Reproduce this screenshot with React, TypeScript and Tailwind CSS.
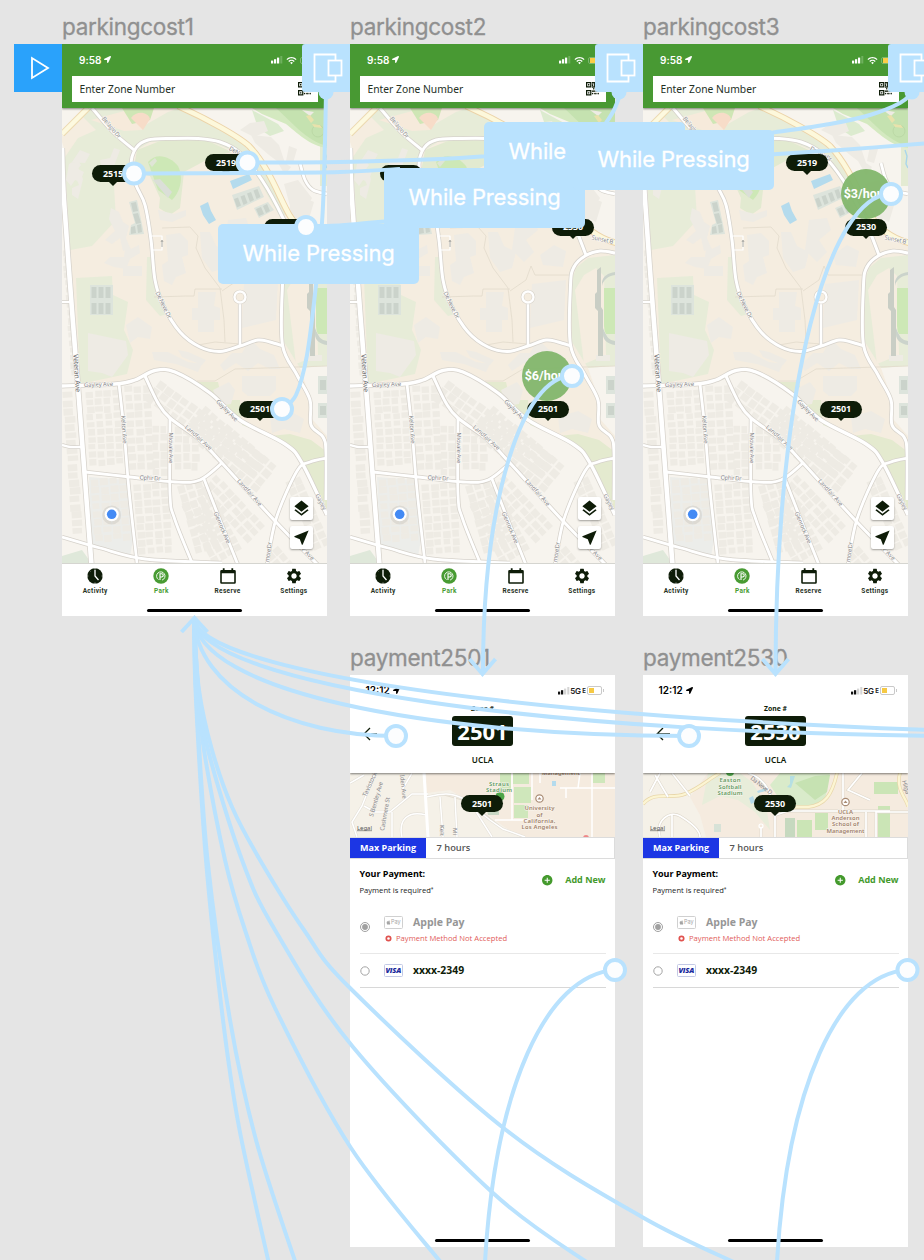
import React from "react";
import { MdAddCircle, MdLayers, MdNearMe, MdSettings, MdWifi } from "react-icons/md";
import { FaApple, FaLocationArrow } from "react-icons/fa";

type Pt = [number, number];

const LINK = "#b9e2fe";
const INK = "#0e1c08";

function smooth(p: Pt[]): string {
  let d = `M${p[0][0]} ${p[0][1]}`;
  for (let i = 0; i < p.length - 1; i++) {
    const a = p[i - 1] ?? p[i];
    const b = p[i];
    const c = p[i + 1];
    const e = p[i + 2] ?? c;
    d += `C${b[0] + (c[0] - a[0]) / 6} ${b[1] + (c[1] - a[1]) / 6} ${c[0] - (e[0] - b[0]) / 6} ${c[1] - (e[1] - b[1]) / 6} ${c[0]} ${c[1]}`;
  }
  return d;
}

const roads: { p: Pt[]; w: number }[] = [
  { p: [[92, 108], [113, 132], [134, 150]], w: 3 },
  { p: [[283, 346], [270, 342], [258, 340], [240, 346], [220, 351.5], [200, 347], [180, 332], [163, 305], [155, 280], [151, 240], [145, 205], [136, 185], [131, 165], [136, 148], [148, 140], [172, 138.5], [198, 138.5], [220, 142], [240, 153], [262, 180], [283, 218], [298, 255]], w: 3 },
  { p: [[327, 253], [312, 251], [297, 256], [286, 267], [282.5, 285], [282.5, 345], [297, 375], [310, 400], [311, 425], [323, 437], [326, 452], [326, 500]], w: 3 },
  { p: [[240, 303], [240, 345]], w: 2.6 },
  { p: [[62, 386], [115, 384], [135, 380], [155, 370.5], [175, 372], [210, 393], [240, 420], [285, 444], [302, 463], [327, 515]], w: 3.4 },
  { p: [[119, 384], [124, 430], [129, 490], [137, 563]], w: 2.8 },
  { p: [[145, 376], [158, 403], [170, 418], [200, 440], [222, 463], [275, 521], [318, 565]], w: 3 },
  { p: [[170, 418], [170, 495], [175, 520], [193, 565]], w: 2.8 },
  { p: [[85, 472], [130, 477], [175, 482], [200, 480], [222, 463]], w: 2.8 },
  { p: [[204, 479], [220, 520], [238, 565]], w: 2.8 },
  { p: [[62, 537], [100, 548], [145, 559], [222, 563]], w: 2.8 },
  { p: [[327, 458], [310, 462], [297, 471], [276, 519], [267, 565]], w: 2.8 },
  { p: [[62, 445], [70, 447], [82, 447]], w: 2.4 },
  { p: [[62, 302], [70, 302]], w: 2.2 },
  { p: [[300, 163], [305, 180], [313, 190], [327, 194]], w: 2.8 },
  { p: [[62, 148], [64, 200], [72, 310], [79, 400], [85, 480], [91.5, 565]], w: 4.6 },
];

const paths: Pt[][] = [
  [[162, 228], [190, 227], [198, 236], [196, 248], [205, 268], [220, 288], [224, 320], [225, 342]],
  [[154, 297], [186, 296], [194, 296], [195, 289], [222, 289]],
  [[222, 291], [238, 280], [243, 266], [247, 275], [282, 275]],
  [[197, 381], [215, 381], [235, 369], [327, 366]],
  [[198, 345], [215, 342], [240, 344]],
];

function noise(n: number): number {
  const v = Math.sin(n * 12.9898) * 43758.5453;
  return v - Math.floor(v);
}

type Block = { x: number; y: number; rot: number; cols: number; rows: number; w: number; h: number; seed: number };

const blocks: Block[] = [
  { x: 85, y: 391, rot: -3, cols: 4, rows: 10, w: 9, h: 7.6, seed: 1 },
  { x: 90, y: 479, rot: -4, cols: 4, rows: 8, w: 9.4, h: 8, seed: 2 },
  { x: 124, y: 386, rot: -3, cols: 3, rows: 10, w: 9, h: 8.5, seed: 3 },
  { x: 152, y: 425, rot: 0, cols: 2, rows: 6, w: 8, h: 8.6, seed: 13 },
  { x: 133, y: 484, rot: -4, cols: 4, rows: 9, w: 9, h: 8, seed: 4 },
  { x: 174, y: 426, rot: 0, cols: 3, rows: 5, w: 8.5, h: 9, seed: 5 },
  { x: 176, y: 486, rot: -16, cols: 3, rows: 8, w: 9, h: 9, seed: 6 },
  { x: 160, y: 379, rot: 36, cols: 14, rows: 3, w: 9.6, h: 9, seed: 7 },
  { x: 205, y: 405, rot: 40, cols: 10, rows: 4, w: 9.6, h: 9, seed: 17 },
  { x: 217, y: 474, rot: 47, cols: 8, rows: 3, w: 9, h: 8.6, seed: 8 },
  { x: 211, y: 490, rot: 62, cols: 8, rows: 4, w: 8.5, h: 8.6, seed: 9 },
  { x: 300, y: 475, rot: 66, cols: 9, rows: 2, w: 8.5, h: 9, seed: 10 },
  { x: 62, y: 250, rot: -4, cols: 1, rows: 17, w: 8, h: 7.5, seed: 11 },
  { x: 62, y: 392, rot: -4, cols: 1, rows: 18, w: 12, h: 8, seed: 12 },
  { x: 278, y: 545, rot: 50, cols: 3, rows: 2, w: 9, h: 9, seed: 14 },
];

function BlockGroup({ b }: { b: Block }) {
  const out: React.ReactNode[] = [];
  for (let r = 0; r < b.rows; r++)
    for (let c = 0; c < b.cols; c++) {
      const k = b.seed * 100 + r * 11 + c;
      out.push(
        <rect
          key={k}
          x={c * b.w + noise(k) * 1.2}
          y={r * b.h + noise(k + 0.3) * 1.2}
          width={b.w - 1 - noise(k + 0.6) * 1.6}
          height={b.h - 0.8 - noise(k + 0.9) * 2}
        />,
      );
    }
  return <g transform={`translate(${b.x} ${b.y}) rotate(${b.rot})`}>{out}</g>;
}

function MapText({ x, y, r, w, s = 6, c = "#88888c", children }: { x: number; y: number; r: number; w: number; s?: number; c?: string; children: string }) {
  return (
    <text
      transform={`translate(${x} ${y}) rotate(${r})`}
      textAnchor="middle"
      dominantBaseline="central"
      fontSize={s}
      textLength={w}
      fill={c}
      stroke="#faf8f4"
      strokeWidth="1.2"
      paintOrder="stroke"
    >
      {children}
    </text>
  );
}

function CampusMap() {
  return (
    <svg viewBox="62 108 265 455" className="block h-[455px] w-[265px]" fontFamily="'Noto Sans', sans-serif">
      <rect x="62" y="108" width="265" height="456" fill="#f5ede0" />
      <path d="M62 108H92L82 112 62 136Z" fill="#f7f4ee" />
      <path d="M62 142L64 148 78 388 L130 383 155 372 175 372 212 394 240 421 285 444 302 463 327 515V564H62Z" fill="#f7f4ee" />
      <path d="M186 108H327V240L306 236 288 214 262 162 240 140Z" fill="#f7f4ee" />
      <path d="M327 365L300 368 311 400V418L327 436Z" fill="#f7f4ee" />
      <path d="M80 114L92 108 134 150 128 170 114 186 116 220 92 246 70 250 66 180 63 160 78 138 96 130Z" fill="#e7ecd8" />
      <path d="M93 108H126L140 128 168 112 180 108 240 141 262 164 286 215 280 217 256 175 236 152 206 140 150 142 137 150 120 136Z" fill="#e7ecd8" />
      <path d="M137 150L160 141 206 140 232 152 212 157 184 172 180 208 170 215 159 208 160 198 150 176 133 172Z" fill="#e2ead0" />
      <path d="M76 278L112 276 113 295 128 302 124 330 133 350 127 374 80 384Z" fill="#e7ecd8" />
      <path d="M147 257L152 257 156 290 168 314 160 316 146 300Z" fill="#e7ecd8" />
      <path d="M283 283L288 268 300 258 327 255V366L300 368 284 342Z" fill="#e7ecd8" />
      <path d="M287 290L296 275 308 268 316 276 318 355 296 364Z" fill="#f5ede0" />
      <path d="M197 382H218L222 400 240 400 242 425 270 436 290 434 311 440 327 452V515L302 463 286 444 240 420 212 392Z" fill="#e4eacf" />
      <path d="M320 110H327V186H320Z" fill="#e4ebd3" />
      <path d="M91 120L128 110 150 108 152 114 142 130 124 131Z" fill="#f6eadb" />
      <path d="M122 108H154L150 120 132 124Z" fill="#cfe6b5" />
      <path d="M131 118C137 110 148 112 150 119L143 130Z" fill="#f7dcc8" />
      <path d="M252 108H327V148C310 146 296 132 286 124L262 114Z" fill="#d4e9c0" />
      <path d="M276 108H327V146C305 140 292 122 276 108Z" fill="#c5e2b0" />
      <path d="M252 110L278 124 284 131 270 136 258 128Z" fill="#dcebcf" />
      <path d="M148 162C156 152 170 156 178 166C184 178 180 192 172 200L158 190Z" fill="#cde8b6" />
      <path d="M153 180L160 179 172 192 168 198Z" fill="#dbdfd8" />
      <path d="M149 163L155 158 157 161 152 167Z" fill="#dfe5d6" />
      <path d="M62 556L82 550 92 564H62Z" fill="#dfe8da" />
      <path d="M89 477L128 480 133 540 130 556 92 547Z" fill="#ecedea" />
      <g fill="#eeebe4">
        <path d="M70 160l8-5 4 6-3 4 6 3-4 10-5-2-4 6-5-6zM73 158l8-12 10 4-5 9zM73 184l7-3-6-14 5-4 5 12-5 20-6-4z" transform="translate(-1 4)" />
        <path d="M111 208l8 4 4 10 6 4-3 12 4 10-7 3-3-13-8 6-7-4 10-9-6-12zM104 263l6-6 14 0 2-16 5 8 8-4 1 8-10 6-4 10-12-2z" />
        <path d="M123 266h19v10h-19zM166 235l14-2 8 8 0 14-6 2 4 16-10 4-4 8-8-4-2-16 6-4zM158 210l16 4 12-4v6l-14 6-12-2zM200 232l10 0 6 14 12 6-4 16-12 4-10-14zM228 220l18-2 4 12-12 10 8 12-10 10-12-12z" />
        <path d="M198 292l18 0-2 14 6 2v12h-6v12h-16v-12h-6v-12h6zM244 284l34-4-2 40-34 8zM252 255l14-10 12 6-3 16-20-2zM126 325l12-8 14 10-2 12-12-2-8 6zM88 333l38 8 2 14-16 22-10-4-14-2z" />
        <path d="M232 353l10 0 8-14 10 10 14 6 6 14-10 0-12-6-10 8-12-8-12 8-4-6zM242 376h34v14l-6 6h-22l-6-5zM152 352l16 0 20 10 14 2-4 8-22-8-22-4zM270 417l20-6 14 8-4 14-16-4-12 4zM308 355h14v6h-14zM178 350l10 2 18 8-4 5-20-8zM213 390l16 -8 6 8-4 14-12 2z" />
        <path d="M240 130l10-7 14-2 4 10-14 6zM251 135l20 2 8 8 6 18 6 4-6 8-8-14-8-6-14-12zM289 146l8 3-4 14-7-2zM284 184l14-4 14 18-8 14-4 12-12-8 2-10zM300 196l14 6-6 20-12-6zM302 110l12 2-4 4zM100 160l10-2 4-10 6 2-6 16-12 6z" />
        {blocks.map((b) => (
          <BlockGroup key={b.seed} b={b} />
        ))}
      </g>
      <g fill="#dde4dc">
        <path d="M129 202l8-2 7 34-15 1 2-10 4-2zM90 285h23v30h-23zM232 195l27-9 5 11-27 13zM254 208l14-6 6 8-15 8z" />
        <path d="M318 376h9v18h-9zM318 403h9v15h-9z" />
      </g>
      <g fill="#cbd3cb">
        <path d="M131 203l5-1 2 9-5 1zM133 214l5-1 3 10-5 1zM131 227l4-1 1 7-5 1zM137 225l4-1 1 8-4 1z" />
        <path d="M91.500 287h5v11h-5zM98.500 287h5v11h-5zM105.500 287h5v11h-5zM91.500 303h5v11h-5zM98.500 303h5v11h-5zM105.500 303h5v11h-5z" />
        <path d="M234 199l4-1.500 3 8-4 2zM240.500 196.500l4-1.500 3 8-4 2zM247 193.500l4-1.500 3 8-4 2zM253.500 190.500l4-1.500 3 8-4 2zM256 209l5-2 3 7-5 2zM263 206l4-2 3 7-4 2zM320 380h6v10h-6zM320 406h6v9h-6z" />
        <path d="M309 270l4-3v40l2 3v46h-5v-45l-3-3v-14l2-2z" fill="#c9cec5" />
        <path d="M327 275c-7 1-12 5-13 11v-4c1-6 6-9 13-10zM315 328c4 10 6 12 12 13v4c-8-1-12-6-12-10z" />
      </g>
      <path d="M316 288h11v46h-9q-2-3-2-8z" fill="#cde8b6" />
      <g fill="#b4dbed">
        <path d="M230 181l19-7 3 6-19 9zM200 206l8-4 3 9 5 9-7 4-6-9z" />
      </g>
      <g fill="none" stroke="#e2dacb" strokeWidth="0.800">
        {paths.map((p, i) => (
          <path key={i} d={"M" + p.map((q) => q.join(" ")).join("L")} />
        ))}
      </g>
      <g fill="none" strokeLinejoin="round">
        <path d="M62 134L88 108" stroke="#ecd9b0" strokeWidth="6.500" />
        <path d="M62 134L88 108" stroke="#fdf9df" strokeWidth="4.500" />
        {roads.map((r, i) => (
          <path key={i} d={smooth(r.p)} stroke="#d6d2cb" strokeWidth={r.w + 1.5} />
        ))}
        {roads.map((r, i) => (
          <path key={i} d={smooth(r.p)} stroke="#ffffff" strokeWidth={r.w} />
        ))}
        <path d="M178 106C205 118 238 136 249 146C270 168 280 200 290 216C300 232 314 239 328 243" stroke="#ecd3a8" strokeWidth="6.400" />
        <path d="M178 106C205 118 238 136 249 146C270 168 280 200 290 216C300 232 314 239 328 243" stroke="#fdf8db" strokeWidth="4.600" />
        <circle cx="240" cy="297" r="5.500" stroke="#d8d3ca" strokeWidth="3.600" fill="#f5ede0" />
        <circle cx="240" cy="297" r="5.500" stroke="#ffffff" strokeWidth="2.400" />
        <path d="M152 236h10v14h-10" stroke="#fff" strokeWidth="1.200" />
        <path d="M162 247v-6m-1 1 1-2 1 2" stroke="#9a9a96" strokeWidth="0.800" />
        <circle cx="318" cy="131" r="6" stroke="#b8d6a2" strokeWidth="0.800" />
      </g>
      <path d="M306 116l4-1 4 5-3 3zM312 124l8 1 2 3-8-1z" fill="#e9e2ac" />
      <path d="M324 150l2 6-1 8 2 4" stroke="#a9d5ec" strokeWidth="1.400" fill="none" />
      <MapText x={111.500} y={127.500} r={50} w={26}>Bellagio Dr</MapText>
      <MapText x={240} y={154} r={30} w={24}>De Neve Dr</MapText>
      <MapText x={163.500} y={305} r={64} w={29}>De Neve Dr</MapText>
      <MapText x={77} y={373} r={86} w={38} s={7} c="#68686c">Veteran Ave</MapText>
      <MapText x={98.500} y={384.500} r={-2} w={29}>Gayley Ave</MapText>
      <MapText x={227} y={410.500} r={45} w={28}>Gayley Ave</MapText>
      <MapText x={124} y={429.500} r={86} w={28}>Kelton Ave</MapText>
      <MapText x={170.500} y={448} r={90} w={31}>Midvale Ave</MapText>
      <MapText x={198.500} y={437.500} r={42} w={34}>Landfair Ave</MapText>
      <MapText x={249.500} y={492.500} r={48} w={34}>Landfair Ave</MapText>
      <MapText x={150} y={478} r={3} w={21}>Ophir Dr</MapText>
      <MapText x={222} y={527.500} r={67} w={34}>Glenrock Ave</MapText>
      <MapText x={268.500} y={552} r={-82} w={20}>more Dr</MapText>
      <MapText x={308} y={554} r={46} w={15}>r Ave</MapText>
      <MapText x={321} y={502} r={63} w={17}>Gayley</MapText>
      <MapText x={314.500} y={239.500} r={12} w={22}>Sunset B</MapText>
      <circle cx="111.700" cy="515" r="9.500" fill="#000" opacity="0.070" />
      <circle cx="111.700" cy="514.300" r="7" fill="#fff" />
      <circle cx="111.700" cy="514.300" r="4.800" fill="#438af4" />
    </svg>
  );
}

function Pin({ x, y, label }: { x: number; y: number; label: string }) {
  return (
    <div className="absolute h-[17px] w-[42px]" style={{ left: x, top: y }}>
      <div className="flex h-full items-center justify-center rounded-full bg-[#0e1c08] font-['Open_Sans',sans-serif] text-[9px] font-bold tracking-[-0.1px] text-white">{label}</div>
      <svg viewBox="0 0 8 4" className="absolute left-[17px] top-[16.5px] h-[4px] w-[8px]">
        <path d="M0 0H8L4 4Z" fill={INK} />
      </svg>
    </div>
  );
}

function Signal({ color, faint }: { color: string; faint: string }) {
  return (
    <svg viewBox="0 0 12 8" className="h-[8px] w-[12px]">
      <rect x="0" y="4.600" width="2.200" height="2.900" fill={color} />
      <rect x="3" y="3.200" width="2.200" height="4.300" fill={color} />
      <rect x="6" y="1.600" width="2.200" height="5.900" fill={faint === "#d5d5d5" ? faint : color} />
      <rect x="9.300" y="0" width="2" height="7.500" fill={faint} />
    </svg>
  );
}

const qrRows = ["1111101", "1000110", "1011011", "1111010", "0101101", "1110110", "1011011"];

function QrIcon() {
  return (
    <svg viewBox="0 0 14 14" className="h-[13.500px] w-[13.500px]" fill={INK}>
      <path d="M0 0H5.600V5.600H0ZM1.300 1.300V4.300H4.300V1.300ZM8.400 0H14V5.600H8.400ZM9.700 1.300V4.300H12.700V1.300ZM0 8.400H5.600V14H0ZM1.300 9.700V12.700H4.300V9.700Z" fillRule="evenodd" />
      <path d="M2.100 2.100h1.400v1.400H2.100zM10.500 2.100h1.400v1.400h-1.400zM2.100 10.500h1.400v1.400H2.100z" />
      {qrRows.map((row, r) =>
        row.split("").map((v, c) => (v === "1" && (r > 3 || c < 2) ? <rect key={`${r}-${c}`} x={6.200 + c * 1.150} y={r < 4 ? r * 1.500 : 6.300 + (r - 4) * 2.500} width="1.300" height="1.400" /> : null)),
      )}
    </svg>
  );
}

const tabs = ["Activity", "Park", "Reserve", "Settings"];

function TabIcon({ name }: { name: string }) {
  if (name === "Activity")
    return (
      <svg viewBox="0 0 16 16" className="h-[16px] w-[16px]">
        <circle cx="8" cy="8" r="7.700" fill={INK} />
        <path d="M8 2V8L11.500 12" stroke="#fff" strokeWidth="1.300" fill="none" />
        <path d="M8 0V1.600M0 8H1.300M14.700 8H16M8 14.600V16M2.500 2.500l.8.800" stroke="#fff" strokeWidth="0.700" />
      </svg>
    );
  if (name === "Park")
    return (
      <svg viewBox="0 0 16 16" className="h-[16px] w-[16px]">
        <circle cx="8" cy="8" r="7.700" fill="#489b33" />
        <path d="M5.500 11.600A4.200 4.200 0 1 1 9 12.100" stroke="#fff" strokeWidth="0.900" fill="none" />
        <path d="M7 12V5.700H8.600A1.600 1.600 0 0 1 8.600 9H7" stroke="#fff" strokeWidth="1.100" fill="none" />
      </svg>
    );
  if (name === "Reserve")
    return (
      <svg viewBox="0 0 16 16" className="h-[16px] w-[16px]">
        <path d="M1.500 2H14.500Q15.800 2 15.800 3.300V14.500Q15.800 15.800 14.500 15.800H1.500Q0.200 15.800 0.200 14.500V3.300Q0.200 2 1.500 2ZM1.800 5.300V14.200H14.200V5.300Z" fill={INK} fillRule="evenodd" />
        <path d="M3.700 0.300V3M12.300 0.300V3" stroke={INK} strokeWidth="1.800" />
      </svg>
    );
  return <MdSettings className="h-[18px] w-[18px] text-[#0e1c08]" />;
}

function Frame({ x, y, title, children }: { x: number; y: number; title: string; children: React.ReactNode }) {
  return (
    <section className="absolute isolate flex w-[265px] flex-col" style={{ left: x, top: y }}>
      <h2 className="flex h-[32px] items-center pb-[2px] font-['Inter',sans-serif] text-[22.5px] leading-none tracking-[-0.3px] text-[#909090] [-webkit-text-stroke:0.3px_#909090]">{title}</h2>
      <div className="relative flex h-[572px] flex-col overflow-hidden bg-white">{children}</div>
    </section>
  );
}

function ParkingScreen({ price }: { price?: { x: number; y: number; text: string } }) {
  return (
    <>
      <header className="relative z-10 flex h-[64px] shrink-0 flex-col bg-[#489933] shadow-[0_1px_2px_rgba(0,0,0,0.45)]">
        <div className="flex h-[32px] items-center pl-[17px] pr-[14px] text-white">
          <span className="font-['Inter',sans-serif] text-[10px] font-semibold tracking-[0.05px]">9:58</span>
          <FaLocationArrow className="mb-[1px] ml-[3px] h-[7px] w-[7px]" />
          <div className="ml-auto flex items-center gap-[3px]">
            <Signal color="#ffffff" faint="#6fb05e" />
            <MdWifi className="h-[11px] w-[11px]" />
            <div className="flex h-[7px] w-[13px] items-center rounded-[2px] border border-[#7db66e] p-px">
              <div className="h-[5px] w-[5px] bg-[#fbcd48]" />
            </div>
          </div>
        </div>
        <div className="mx-[9.5px] flex h-[25.5px] items-center justify-between bg-white pl-[8px] pr-[6.5px]">
          <span className="font-['Noto_Sans',sans-serif] text-[10.3px] leading-none text-[#24301f]">Enter Zone Number</span>
          <QrIcon />
        </div>
      </header>
      <div className="relative h-[455px] shrink-0">
        <CampusMap />
        {price && (
          <div className="absolute flex h-[50px] w-[50px] items-center justify-center rounded-full bg-[#82b66c]/95 font-['Roboto',sans-serif] text-[12.5px] font-bold text-white" style={{ left: price.x, top: price.y }}>
            {price.text}
          </div>
        )}
        <Pin x={30} y={57} label="2515" />
        <Pin x={143} y={46} label="2519" />
        <Pin x={202} y={110.500} label="2530" />
        <Pin x={177} y={292.500} label="2501" />
        <div className="absolute bottom-[14px] right-[14.5px] flex flex-col gap-[6px]">
          <div className="flex h-[23px] w-[23px] items-center justify-center rounded-[2px] bg-white shadow-[0_1px_2px_rgba(0,0,0,0.35)]">
            <MdLayers className="h-[19px] w-[19px] text-[#0e1c08]" />
          </div>
          <div className="flex h-[23px] w-[23px] items-center justify-center rounded-[2px] bg-white shadow-[0_1px_2px_rgba(0,0,0,0.35)]">
            <MdNearMe className="h-[19px] w-[19px] text-[#0e1c08]" />
          </div>
        </div>
      </div>
      <nav className="relative flex h-[53px] flex-col border-t border-[#d5d5d0] bg-white">
        <div className="grid grid-cols-4">
          {tabs.map((t) => (
            <div key={t} className="flex flex-col items-center pt-[3px]">
              <div className="flex h-[17px] items-center">
                <TabIcon name={t} />
              </div>
              <span className={t === "Park" ? "mt-[1.500px] font-['Roboto',sans-serif] text-[6.5px] font-bold leading-[10px] tracking-[0.35px] text-[#489b33]" : "mt-[1.500px] font-['Roboto',sans-serif] text-[6.5px] font-bold leading-[10px] tracking-[0.35px] text-[#27331f]"}>{t}</span>
            </div>
          ))}
        </div>
        <div className="mx-auto mt-[13px] h-[3px] w-[95px] rounded-full bg-black" />
      </nav>
    </>
  );
}

function MiniMap2501() {
  return (
    <svg viewBox="350 773 265 64" className="block h-[64px] w-[265px]" fontFamily="'Noto Sans', sans-serif">
      <rect x="350" y="773" width="265" height="64" fill="#f5f1e8" />
      <path d="M426 773H615V837H520L503 826 480 808 450 790 427 793Z" fill="#f5ebdf" />
      <path d="M500 773H511V792H500ZM513 773H529V784H513ZM514 787H531V803H514ZM514 805H528V818H514ZM593 773H605V783H593Z" fill="#cfe7bb" />
      <path d="M485 798H499V815H488Z" fill="#c9d8c4" />
      <path d="M440 794L470 802 500 826" stroke="#e4ddd0" fill="none" />
      <g fill="none" stroke="#e4e0d8" strokeWidth="2.600">
        <path d="M350 783L364 775M357 837L352 822 362 806 375 773M364 806L375 812 390 812 412 794 428 794M392 837V812M402 790L412 773M402 837C398 820 408 810 426 815M426 797C442 794 448 792 462 798L490 820 503 829 525 837M440 797L443 837M455 797L457 837M470 802L492 837" />
      </g>
      <g fill="none" stroke="#fff" strokeWidth="1.500">
        <path d="M350 783L364 775M357 837L352 822 362 806 375 773M364 806L375 812 390 812 412 794 428 794M392 837V812M402 790L412 773M402 837C398 820 408 810 426 815M426 797C442 794 448 792 462 798L490 820 503 829 525 837M440 797L443 837M455 797L457 837M470 802L492 837" />
        <path d="M424 773L428 837" strokeWidth="3" />
        <path d="M512 773V820M495 820H530M532 773V800M566 798V788H578L580 773M592 773V837M540 773V783M615 788H560" />
      </g>
      <g fontSize="6" fill="#85858a">
        <text transform="translate(366 797) rotate(-65)" textLength="26">Tavistock</text>
        <text transform="translate(373 817) rotate(-74)" textLength="36">S Bentley Ave</text>
        <text transform="translate(384 831) rotate(-80)" textLength="34">Cashmere St</text>
        <text transform="translate(400 775) rotate(84)" textLength="24">Iden Ave</text>
        <text transform="translate(440 825) rotate(90)" textLength="11">Kelt</text>
        <text transform="translate(453 828) rotate(90)">Mi</text>
      </g>
      <circle cx="500" cy="796.500" r="4.500" fill="#4ea64a" />
      <g fontSize="6" fontWeight="600" textAnchor="middle" stroke="#faf6f0" strokeWidth="1" paintOrder="stroke">
        <g fill="#5f9a62">
          <text x="499" y="785.500" textLength="20">Straus</text>
          <text x="499" y="792" textLength="26">Stadium</text>
        </g>
        <g fill="#a08068">
          <text x="561" y="775" textLength="38">Management</text>
          <text x="539.500" y="810" textLength="30">University</text>
          <text x="539.500" y="816.500">of</text>
          <text x="539.500" y="822.500" textLength="32">California,</text>
          <text x="539.500" y="829" textLength="36">Los Angeles</text>
        </g>
      </g>
      <circle cx="539.500" cy="798.500" r="3.700" fill="#fff" stroke="#a98c75" strokeWidth="1.200" />
      <path d="M537.500 799.500L539.500 797L541.500 799.500Z" fill="#a98c75" />
      <path d="M552 781h4v5h-4z" fill="#b4dbed" />
      <circle cx="586" cy="838" r="3" fill="#e88" />
      <text x="357" y="829.500" fontSize="6" fill="#555" textDecoration="underline" textLength="15">Legal</text>
    </svg>
  );
}

function MiniMap2530() {
  return (
    <svg viewBox="643 773 265 64" className="block h-[64px] w-[265px]" fontFamily="'Noto Sans', sans-serif">
      <rect x="643" y="773" width="265" height="64" fill="#f5ebdf" />
      <path d="M643 773H708L690 797 700 815 706 837H643Z" fill="#f5f1e8" />
      <path d="M708 773H740L752 782 766 805 770 830 755 812 738 800 720 796 702 805Z" fill="#e8edda" />
      <path d="M780 773H830L825 800 806 808 780 800 770 785Z" fill="#d9ebca" />
      <path d="M795 783L815 776 830 775 827 792 815 800Z" fill="#c6e2b2" />
      <path d="M815 813H828V830H815ZM797 820H812V837H797ZM874 782H898V794H874ZM878 806H890V837H878Z" fill="#cbe5b6" />
      <path d="M785 818H795V837H785Z" fill="#c6d9bf" />
      <path d="M714 824h7v8h-7z" fill="#d7e2d7" />
      <path d="M749 798l4-2 2 6-4 2zM757 791l8-3 1 3-8 2z" fill="#b5dbe9" />
      <path d="M787 787l3-3v-8l5 0-4 12z" fill="#b5dfe3" />
      <g fill="none">
        <path d="M643 804C655 790 670 800 685 794S710 778 720 773M837 773C832 795 825 805 808 807H785M900 773C895 790 908 800 908 807" stroke="#e8d6aa" strokeWidth="3.600" />
        <path d="M643 804C655 790 670 800 685 794S710 778 720 773M837 773C832 795 825 805 808 807H785M900 773C895 790 908 800 908 807" stroke="#fcf5d3" strokeWidth="2.300" />
        <path d="M650 792L660 773M668 797L655 775M660 837C655 820 670 810 680 816S700 830 700 837M672 837V815M690 796L672 773M748 773C770 780 772 800 776 815L788 811 890 811M775 815V837M761 827V837M843 773V812M908 812H876V837M862 773L848 790 870 800M866 812V837" stroke="#ded8cc" strokeWidth="2.800" />
        <path d="M650 792L660 773M668 797L655 775M660 837C655 820 670 810 680 816S700 830 700 837M672 837V815M690 796L672 773M748 773C770 780 772 800 776 815L788 811 890 811M775 815V837M761 827V837M843 773V812M908 812H876V837M862 773L848 790 870 800M866 812V837" stroke="#fff" strokeWidth="1.700" />
        <circle cx="761" cy="826" r="2" stroke="#fff" strokeWidth="1.200" />
      </g>
      <circle cx="730" cy="772" r="4" fill="#4ea64a" />
      <g fontSize="6" fontWeight="600" textAnchor="middle" stroke="#faf6f0" strokeWidth="1" paintOrder="stroke">
        <g fill="#5f9a62">
          <text x="730" y="782" textLength="21">Easton</text>
          <text x="730" y="788.500" textLength="23">Softball</text>
          <text x="730" y="794.500" textLength="25">Stadium</text>
        </g>
        <g fill="#a08068">
          <text x="845.500" y="813.500" textLength="15">UCLA</text>
          <text x="845.500" y="819.500" textLength="28">Anderson</text>
          <text x="845.500" y="826" textLength="27">School of</text>
          <text x="845.500" y="832.500" textLength="38">Management</text>
        </g>
      </g>
      <circle cx="845.500" cy="802" r="3.700" fill="#fff" stroke="#a98c75" strokeWidth="1.200" />
      <path d="M843.500 803L845.500 800.500L847.500 803Z" fill="#a98c75" />
      <g fontSize="6" fill="#85858a">
        <text transform="translate(750 779) rotate(38)" textLength="26">Da Neve D</text>
        <text transform="translate(902 781) rotate(74)" textLength="14">Hilga</text>
      </g>
      <text x="650" y="829.500" fontSize="6" fill="#555" textDecoration="underline" textLength="15">Legal</text>
    </svg>
  );
}

function PaymentScreen({ zone, map }: { zone: string; map: React.ReactNode }) {
  return (
    <>
      <header className="relative z-10 flex h-[98px] shrink-0 flex-col bg-white shadow-[0_1px_2px_rgba(0,0,0,0.5)]">
        <div className="flex h-[31px] items-center pl-[15.5px] pr-[11px]">
          <span className="font-['Inter',sans-serif] text-[10px] font-semibold text-black">12:12</span>
          <FaLocationArrow className="ml-[3px] h-[7px] w-[7px] text-black" />
          <div className="ml-auto flex items-center">
            <Signal color="#111111" faint="#d5d5d5" />
            <span className="font-['Inter',sans-serif] text-[8px] font-semibold leading-none tracking-[-0.2px] text-[#222]">5G</span>
            <span className="ml-[1.500px] font-['Inter',sans-serif] text-[6px] font-bold leading-none text-[#222]">E</span>
            <span className="ml-[1px] flex h-[8.500px] w-[15px] items-center rounded-[2px] border border-[#c9c9c9] p-px">
              <span className="h-[5.500px] w-[5px] bg-[#f6c944]" />
            </span>
            <span className="ml-px h-[3px] w-px bg-[#c9c9c9]" />
          </div>
        </div>
        <div className="grid flex-1 grid-cols-[60px_1fr_60px] items-start">
          <svg viewBox="0 0 14 14" className="ml-[13px] mt-[21px] h-[14px] w-[14px]">
            <path d="M7 1L1 7L7 13M1 7H14" stroke={INK} strokeWidth="1.300" fill="none" />
          </svg>
          <div className="flex flex-col items-center font-['Noto_Sans',sans-serif] text-[#0e1c08]">
            <span className="-mt-[2px] text-[6.800px] font-bold leading-[9px]">Zone #</span>
            <span className="mt-[2.500px] flex h-[30px] w-[61px] items-center justify-center rounded-[3px] bg-[#0e1c08] font-['Open_Sans',sans-serif] text-[22px] font-bold leading-none text-white">{zone}</span>
            <span className="mt-[8.500px] text-[8.200px] font-semibold leading-[12px]">UCLA</span>
          </div>
        </div>
      </header>
      <div className="relative shrink-0">
        {map}
        <Pin x={111} y={22} label={zone} />
      </div>
      <div className="flex h-[22px] shrink-0 items-stretch border border-l-0 border-[#dcdcdc] font-['Open_Sans',sans-serif] text-[9px]">
        <div className="flex w-[76px] items-center justify-center bg-[#1c36e4] font-bold text-white">Max Parking</div>
        <div className="flex items-center pl-[10.5px] text-[9.300px] font-semibold text-[#555]">7 hours</div>
      </div>
      <div className="flex flex-col px-[9.5px] font-['Open_Sans',sans-serif]">
        <div className="flex h-[41px] items-center justify-between">
          <div className="flex flex-col pt-[5px]">
            <span className="text-[9px] font-bold leading-[16px] tracking-[-0.05px] text-black">Your Payment:</span>
            <span className="text-[7.6px] leading-[16px] text-[#222]">
              Payment is required<sup className="text-[5px]">*</sup>
            </span>
          </div>
          <div className="flex items-center pt-px text-[#449a2d]">
            <MdAddCircle className="h-[12.500px] w-[12.500px]" />
            <span className="ml-[11.500px] text-[9px] font-bold">Add New</span>
          </div>
        </div>
        <div className="flex h-[54px] items-center border-b border-[#e8e8e8]">
          <svg viewBox="0 0 12 12" className="-ml-[0.5px] h-[12px] w-[12px]">
            <circle cx="6" cy="6" r="4.500" fill="none" stroke="#a0a0a0" />
            <circle cx="6" cy="6" r="2.900" fill="#a0a0a0" />
          </svg>
          <div className="ml-[12.500px] flex flex-col pt-[8px]">
            <div className="flex items-center">
              <span className="flex h-[13px] w-[19.500px] items-center justify-center rounded-[1.5px] border border-[#d0d0d0] font-['Inter',sans-serif] text-[5.5px] text-[#a5a5a5]">
                <FaApple className="h-[5px] w-[5px]" />
                Pay
              </span>
              <span className="ml-[10px] text-[10.5px] font-bold leading-[16px] text-[#969696]">Apple Pay</span>
            </div>
            <div className="flex items-center">
              <svg viewBox="0 0 7 7" className="ml-[1px] h-[7px] w-[7px]">
                <circle cx="3.500" cy="3.500" r="2.200" fill="#fff" stroke="#e0524f" strokeWidth="1.700" />
              </svg>
              <span className="ml-[4.500px] text-[7.65px] leading-[17px] text-[#df5d5b]">Payment Method Not Accepted</span>
            </div>
          </div>
        </div>
        <div className="flex h-[34px] items-center border-b border-[#d8d8d8]">
          <svg viewBox="0 0 12 12" className="-ml-[0.5px] h-[12px] w-[12px]">
            <circle cx="6" cy="6" r="4.200" fill="none" stroke="#a5a5a5" />
          </svg>
          <span className="ml-[12.500px] flex h-[13px] w-[19.500px] items-center justify-center rounded-[1.5px] border border-[#c3c9e6] text-[7.500px] font-extrabold italic tracking-[-0.2px] text-[#1a2a9c]">VISA</span>
          <span className="ml-[10px] text-[10.4px] font-bold leading-none text-[#0e1c08]">xxxx-2349</span>
        </div>
      </div>
      <div className="mx-auto mb-[5px] mt-auto h-[3px] w-[95px] shrink-0 rounded-full bg-black" />
    </>
  );
}

const links: Pt[][] = [
  [[326, 92], [325, 140], [322.500, 215], [316, 285], [307, 355], [296, 395], [282, 409]],
  [[621, 92], [614, 110], [604, 126]],
  [[913, 92], [900, 103], [870, 115], [830, 124], [770, 133]],
  [[770, 154.500], [840, 150], [924, 143.500]],
  [[134, 173.500], [250, 173], [340, 172], [400, 169]],
  [[248, 162.500], [340, 162], [440, 159], [490, 156]],
  [[306, 227], [345, 225], [390, 221]],
  [[194, 622], [196, 700], [206, 860], [223, 1020], [239, 1127], [269, 1264]],
  [[194, 622], [196.500, 700], [207.500, 860], [230, 1020], [256, 1140], [296, 1264]],
  [[194, 622], [198, 690], [204, 750], [225, 860], [245, 930], [275, 1008], [351, 1148], [443, 1265]],
  [[194, 622], [198.500, 690], [208, 750], [242, 860], [275, 930], [353, 1047], [493, 1193], [591, 1265]],
  [[194, 622], [199, 690], [212, 750], [232, 807], [260, 860], [304, 930], [351, 989], [506, 1130], [642, 1217], [740, 1265]],
];

const curves = [
  "M572 376C522 376 483 500 483 672",
  "M891 194C830 194 776 380 775.500 672",
  "M194 618C197 690 290 736 396 736",
  "M194 618C198 690 420 736 689 736",
  "M194 618C198 686 560 736 982 736",
  "M194 618C198 680 640 736 1275 736",
  "M615 970C545 975 495 1090 485 1262",
  "M907 970C837 975 787 1090 777 1262",
  "M469.500 659L482.500 674L495.500 659",
  "M762.500 659L775.500 674L788.500 659",
  "M181.500 632L194.500 618L207.500 632",
];

const handles: Pt[] = [[134, 173.500], [247.500, 162.500], [306, 227], [282, 409], [572, 376], [891, 194], [396, 736], [689, 736], [615, 970], [907.500, 970]];

function PressLabel({ x, y, text = "While Pressing" }: { x: number; y: number; text?: string }) {
  return (
    <div className="absolute flex h-[60px] w-[201px] items-center whitespace-nowrap rounded-[5px] bg-[#b9e2fe] pb-px pl-[24.5px] font-['Inter',sans-serif] text-[22px] tracking-[-0.15px] text-white [-webkit-text-stroke:0.3px_#ffffff]" style={{ left: x, top: y }}>
      {text}
    </div>
  );
}

function DeviceBadge({ x }: { x: number }) {
  return (
    <svg viewBox="0 0 48 56" className="absolute top-[44px] h-[56px] w-[48px]" style={{ left: x }}>
      <circle cx="24" cy="48" r="7.500" fill={LINK} />
      <path d="M3 0H48V48H3Q0 48 0 45V3Q0 0 3 0Z" fill={LINK} />
      <path d="M33.500 16V10.500H12.500V37.500H33.500V32" fill="none" stroke="#fff" strokeWidth="1.800" />
      <rect x="26.500" y="16.500" width="13" height="15" fill="none" stroke="#fff" strokeWidth="1.800" />
    </svg>
  );
}

export default function App() {
  return (
    <main className="relative h-[1260px] w-[924px] overflow-hidden bg-[#e5e5e5]">
      <Frame x={62} y={12} title="parkingcost1">
        <ParkingScreen />
      </Frame>
      <Frame x={350} y={12} title="parkingcost2">
        <ParkingScreen price={{ x: 172, y: 243, text: "$6/hour" }} />
      </Frame>
      <Frame x={643} y={12} title="parkingcost3">
        <ParkingScreen price={{ x: 198, y: 61, text: "$3/hour" }} />
      </Frame>
      <Frame x={350} y={643} title="payment2501">
        <PaymentScreen zone="2501" map={<MiniMap2501 />} />
      </Frame>
      <Frame x={643} y={643} title="payment2530">
        <PaymentScreen zone="2530" map={<MiniMap2530 />} />
      </Frame>

      <div className="absolute left-[14px] top-[44px] flex h-[48px] w-[48px] items-center justify-center bg-[#2aa2fb]">
        <svg viewBox="0 0 20 24" className="ml-[3px] h-[24px] w-[20px]">
          <path d="M2 2V22L18 12Z" fill="none" stroke="#fff" strokeWidth="1.800" />
        </svg>
      </div>

      <svg viewBox="0 0 924 1260" className="absolute left-0 top-0 h-[1260px] w-[924px]" fill="none" stroke={LINK} strokeWidth="4">
        {links.map((p, i) => (
          <path key={i} d={smooth(p)} />
        ))}
        {curves.map((d) => (
          <path key={d} d={d} />
        ))}
      </svg>

      <DeviceBadge x={302} />
      <DeviceBadge x={595} />
      <DeviceBadge x={888} />

      <PressLabel x={218} y={224} />
      <PressLabel x={484} y={122} text="While" />
      <PressLabel x={384} y={168} />
      <PressLabel x={573} y={130} />

      <svg viewBox="0 0 924 1260" className="absolute left-0 top-0 h-[1260px] w-[924px]">
        {handles.map((h) => (
          <circle key={h.join("-")} cx={h[0]} cy={h[1]} r="10" fill="#fcfdfe" stroke={LINK} strokeWidth="4" />
        ))}
      </svg>
    </main>
  );
}
